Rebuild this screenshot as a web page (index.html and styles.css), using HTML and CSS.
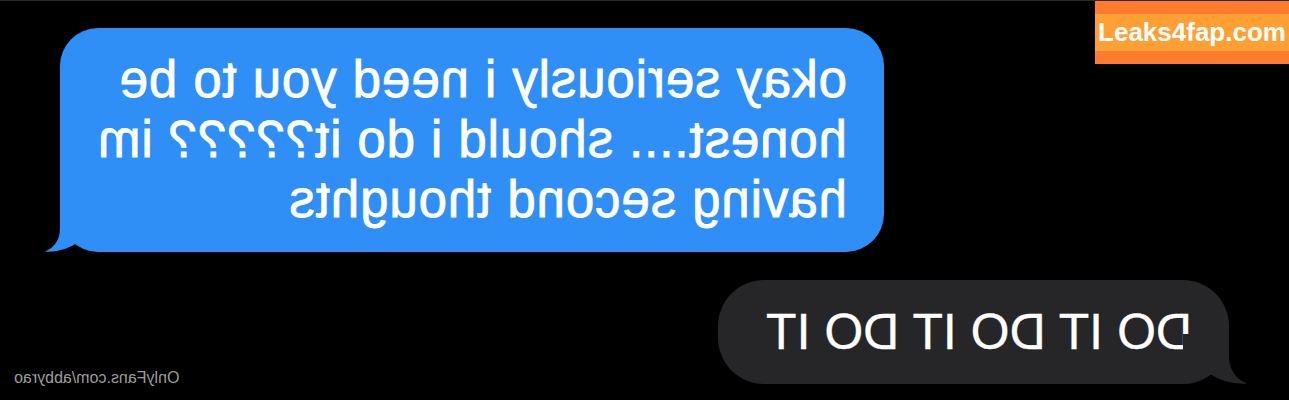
FILE: index.html
```html
<!DOCTYPE html>
<html lang="en">
<head>
<meta charset="utf-8">
<title>Messages</title>
<link rel="stylesheet" href="styles.css">
</head>
<body>
<div class="screen">
  <div class="bubble bubble-sent">
    <div class="mirror text-sent">
      <div class="line">okay seriously i need you to be</div>
      <div class="line">honest.... should i do it????? im</div>
      <div class="line">having second thoughts</div>
    </div>
    <svg class="tail tail-sent" viewBox="0 0 62 50" width="62" height="50" aria-hidden="true">
      <path d="M16 0 L16 26 Q16 43 1 49.5 Q18 51 35 40 Q44 49 62 50 L62 0 Z" fill="#2f8ff6"/>
    </svg>
  </div>

  <div class="bubble bubble-recv">
    <div class="mirror text-recv">DO IT DO IT DO IT</div>
    <svg class="tail tail-recv" viewBox="0 0 62 50" width="62" height="50" aria-hidden="true">
      <path d="M16 0 L16 22 Q16 42 -2 49.5 Q18 51 35 40 Q44 49 62 50 L62 0 Z" fill="#262629"/>
    </svg>
  </div>

  <div class="of-mark mirror">OnlyFans.com/abbyrao</div>

  <div class="leak-mark">
    <div class="leak-band">Leaks4fap.com</div>
  </div>
</div>
</body>
</html>
```

FILE: styles.css
```css
html, body {
  margin: 0;
  padding: 0;
  background: #000;
}

.screen {
  position: relative;
  width: 1289px;
  height: 400px;
  box-sizing: border-box;
  border-top: 1px solid #2b2b2b;
  background: #000;
  display: flex;
  flex-direction: column;
  align-items: flex-start;
  overflow: hidden;
  font-family: "Liberation Sans", Arial, sans-serif;
  color: #fff;
}

.mirror {
  transform: scaleX(-1);
}

.bubble {
  position: relative;
}

.bubble-sent {
  margin: 27px 0 0 60px;
  width: 824px;
  box-sizing: border-box;
  padding: 22px 37px 22px 37px;
  background: #2f8ff6;
  border-radius: 38px;
}

.text-sent {
  font-size: 51px;
  line-height: 60px;
  letter-spacing: 0.9px;
  -webkit-text-stroke: 0.8px #fff;
  white-space: nowrap;
  text-align: left;
}

.bubble-recv {
  align-self: flex-end;
  margin: 28px 60px 0 0;
  width: 511px;
  height: 104px;
  box-sizing: border-box;
  padding: 0 37px;
  background: #262629;
  border-radius: 46px;
  display: flex;
  align-items: center;
}

.text-recv {
  flex: 1;
  font-size: 50px;
  line-height: 56px;
  -webkit-text-stroke: 0.3px #fff;
  white-space: nowrap;
  text-align: left;
}

.tail {
  position: absolute;
  bottom: 0;
  overflow: visible;
}

.tail-sent {
  left: -16px;
}

.tail-recv {
  right: -16px;
  transform: scaleX(-1);
}

.of-mark {
  position: absolute;
  left: 14px;
  top: 369px;
  font-size: 16px;
  line-height: 16px;
  color: #9c9c9c;
  white-space: nowrap;
}

.leak-mark {
  position: absolute;
  top: 0;
  right: 0;
  width: 194px;
  height: 63px;
  background: #ff7c2e;
  box-sizing: border-box;
  padding-top: 13px;
}

.leak-band {
  height: 37px;
  background: #ffa035;
  color: #fff;
  font-weight: bold;
  font-size: 26px;
  line-height: 37px;
  text-align: center;
  white-space: nowrap;
}
```
